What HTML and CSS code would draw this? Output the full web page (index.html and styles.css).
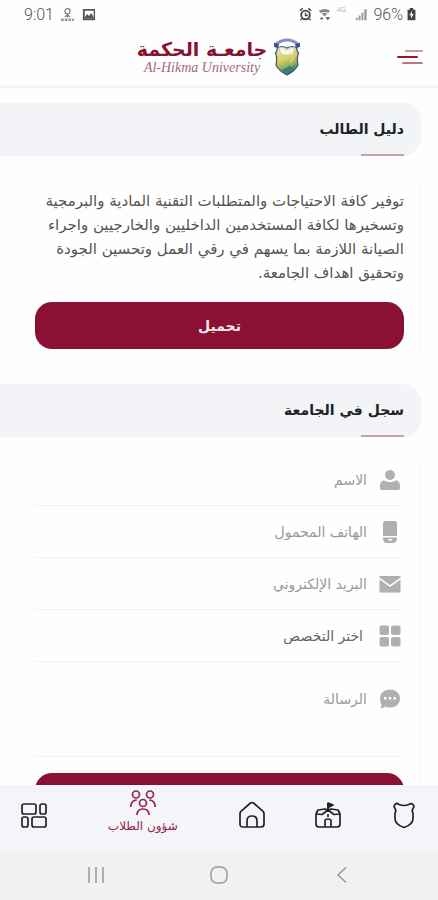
FILE: index.html
```html
<!DOCTYPE html>
<html lang="ar" dir="rtl">
<head>
<meta charset="utf-8">
<meta name="viewport" content="width=device-width, initial-scale=1">
<title>جامعة الحكمة</title>
<link rel="stylesheet" href="styles.css">
</head>
<body>
<div class="status" dir="ltr">
  <div class="status-group">
    <span class="clock">9:01</span>
    <svg class="status-icon" viewBox="0 0 16 16" fill="none" stroke="#777" stroke-width="1.2"><circle cx="8" cy="4.500" r="2.800"/><path d="M8 7.500v4M5 10.500l3-2 3 2"/><path d="M1 13.500h14" stroke-width="2.600" stroke="#999" stroke-dasharray="3 1"/></svg>
    <svg class="status-icon" viewBox="0 0 16 16"><path fill="#555" fill-rule="evenodd" d="M2 2h13v12H2zM4 4v8h9.500V4z"/><path fill="#555" d="M4 11l2.500-3.500 2 2L11 6.500l2.500 4.500v1H4z"/></svg>
  </div>
  <div class="status-group status-right">
    <svg class="status-icon" viewBox="0 0 16 16" fill="none" stroke="#444"><circle cx="8" cy="8.500" r="4.600" stroke-width="2"/><path d="M8 6v3h2.500M2 4l3-2.500M14 4l-3-2.500M4 12.500L2.500 14M12 12.500l1.500 1.500" stroke-width="1.500"/></svg>
    <svg class="status-icon" viewBox="0 0 16 16"><path d="M2 4q6-4 12 0l-2 2.500q-4-2.500-8 0zM5 7q3-2 6 0L8 10z" fill="#888"/><path d="M9 11h5l-2.500 3zM3 13l2-2.500L7 13z" fill="#555"/></svg>
    <span class="network">4G</span>
    <svg class="status-icon" viewBox="0 0 16 16"><path d="M2 14v-2.500h2V14zM5 14v-5h2v5zM8 14V6h2v8zM11 14V2.500h2.500V14z" fill="#999"/></svg>
    <span class="battery-level">96%</span>
    <svg class="battery" viewBox="0 0 10 16"><path d="M3 1h4v2h2.500v12H.5V3H3z" fill="#444"/><path d="M5.500 4.500L2.500 9.500h2v3.500l3-5h-2z" fill="#fff"/></svg>
  </div>
</div>

<header class="header">
  <button class="menu" aria-label="القائمة">
    <svg viewBox="0 0 28 18" stroke-width="2" stroke-linecap="round"><path d="M10 3h16" stroke="#c59aa4"/><path d="M2 9h19" stroke="#941734"/><path d="M7 15h19" stroke="#b97887"/></svg>
  </button>
  <a class="brand" href="#" dir="ltr">
    <span class="brand-text">
      <span class="brand-ar" lang="ar" dir="rtl">جامعـة الحكمة</span>
      <span class="brand-en" lang="en">Al-Hikma University</span>
    </span>
    <svg class="crest" viewBox="0 0 28 40">
      <defs><linearGradient id="crestFill" x1="0" y1="0" x2="0.3" y2="1"><stop offset="0" stop-color="#eee9bd"/><stop offset=".5" stop-color="#d9d267"/><stop offset=".78" stop-color="#91ae60"/><stop offset="1" stop-color="#247b82"/></linearGradient></defs>
      <path d="M4 11Q5 13 2.500 16Q4.500 20 3 28Q6 34 14 38Q22 34 25 28Q23.500 20 25.500 16Q23 13 24 11Q19 8 14 11Q9 8 4 11z" fill="url(#crestFill)" stroke="#44525d" stroke-width="1.200"/>
      <path d="M6 11Q10 9 14 13Q18 9 22 11L20 17Q14 20 8 17z" fill="#f5f5ed" stroke="#b8bba0" stroke-width=".7"/>
      <path d="M2 8Q14-2 26 8" fill="none" stroke="#8991c4" stroke-width="3"/>
      <path d="M1 6l5 1-1 4-4-1zM27 6l-5 1 1 4 4-1z" fill="#3e4c9b"/>
      <path d="M13 31q3-3 5-1t4-4q0 5-8 10-3-1-5-3z" fill="#32836f"/>
      <path d="M18 16l2 6-3 4" fill="none" stroke="#eee482"/>
    </svg>
  </a>
</header>

<main class="content">
  <section>
    <h2 class="section-title">دليل الطالب</h2>
    <div class="card guide">
      <p class="guide-text">توفير كافة الاحتياجات والمتطلبات التقنية المادية والبرمجية<br>وتسخيرها لكافة المستخدمين الداخليين والخارجيين واجراء<br>الصيانة اللازمة بما يسهم في رقي العمل وتحسين الجودة<br>وتحقيق اهداف الجامعة.</p>
      <button class="primary">تحميل</button>
    </div>
  </section>
  <section>
    <h2 class="section-title">سجل في الجامعة</h2>
    <form class="card form">
      <div class="field">
        <label for="name" aria-label="الاسم"><svg class="field-icon" viewBox="0 0 22 22"><circle cx="11" cy="6" r="5"/><path d="M1 17c0-3.500 2-5.500 4.500-5.500 3 2 8 2 11 0 2.500 0 4.500 2 4.500 5.500v2c0 1.500-1 2-2 2H3c-1 0-2-.5-2-2z"/></svg></label>
        <input id="name" type="text" placeholder="الاسم">
      </div>
      <div class="field">
        <label for="phone" aria-label="الهاتف المحمول"><svg class="field-icon" viewBox="0 0 22 22"><path d="M6.500 0h9Q18 0 18 2.500V15H4V2.500Q4 0 6.500 0z"/><path fill-rule="evenodd" d="M4 16.500h14Q18 22 14 22H8q-4 0-4-5.500zM9 18v1.500h4V18z"/></svg></label>
        <input id="phone" type="tel" dir="rtl" placeholder="الهاتف المحمول">
      </div>
      <div class="field">
        <label for="email" aria-label="البريد الإلكتروني"><svg class="field-icon" viewBox="0 0 22 22"><path d="M.5 3h21v1.500L11 12 .5 4.500z"/><path d="M.5 6.500L11 14l10.500-7.500V19.500H.5z"/></svg></label>
        <input id="email" type="email" placeholder="البريد الإلكتروني">
      </div>
      <div class="field">
        <label for="major" aria-label="التخصص"><svg class="field-icon" viewBox="0 0 22 22"><rect x="0.500" y="0.500" width="9.500" height="9.500" rx="2"/><rect x="12" y="0.500" width="9.500" height="9.500" rx="2"/><rect x="0.500" y="12" width="9.500" height="9.500" rx="2"/><rect x="12" y="12" width="9.500" height="9.500" rx="2"/></svg></label>
        <select id="major"><option>اختر التخصص</option></select>
      </div>
      <div class="field message">
        <label for="message" aria-label="الرسالة"><svg class="field-icon" viewBox="0 0 22 22"><path fill-rule="evenodd" d="M11 1.500c6 0 10 4 10 9s-4 9-10 9q-3 0-5-1-2 2-4.500 2 1-2 1-4Q1 14 1 10.500c0-5 4-9 10-9zM5 9v2.500h2.500V9zm4.800 0v2.500h2.400V9zm4.700 0v2.500H17V9z"/></svg></label>
        <textarea id="message" rows="2" placeholder="الرسالة"></textarea>
      </div>
      <button class="primary" type="submit" aria-label="إرسال"></button>
    </form>
  </section>
</main>

<nav class="tabs">
  <a href="#" aria-label="الجامعة"><svg class="tab-icon" viewBox="0 0 26 28"><path d="M4 3.500q2-2 4 0 5 2 10 0 2-2 4 0 1.800 2 0 4-1.500 2 0 5v5q0 6-9 9-9-3-9-9v-5q1.500-3 0-5-1.800-2 0-4z"/></svg></a>
  <a href="#" aria-label="الكليات"><svg class="tab-icon" viewBox="0 0 26 28"><path d="M13 9V2"/><path d="M13 2l5 2-5 2.500z" fill="currentColor"/><path d="M1 13l2-4 7-1 3 1 3-1 7 1 2 4-6 .5L13 9l-6 4.500z"/><path d="M1 13v10q0 3 3 3h18q3 0 3-3V13M10 26v-6q0-2 3-2t3 2v6M13 13v3"/></svg></a>
  <a href="#" aria-label="الرئيسية"><svg class="tab-icon" viewBox="0 0 26 28"><path d="M1 12.500Q1 11 2.500 9.800L11.500 2q1.500-1 3 0l9 7.800Q25 11 25 12.500V23q0 3-3 3H4q-3 0-3-3zM8 26v-6q0-5 5-5t5 5v6"/></svg></a>
  <a class="active" href="#" aria-current="page"><svg class="tab-icon" viewBox="0 0 26 28"><circle cx="6" cy="5.500" r="3.500"/><circle cx="20" cy="5.500" r="3.500"/><circle cx="13" cy="14" r="3.500"/><path d="M.8 18q0-6.500 6-7M25.200 18q0-6.500-6-7M7 26q0-6 6-6t6 6"/></svg><span>شؤون الطلاب</span></a>
  <a href="#" aria-label="المزيد"><svg class="tab-icon" viewBox="0 0 26 28"><rect x="1" y="3" width="14" height="10" rx="2"/><rect x="19" y="3" width="6" height="10" rx="2"/><rect x="1" y="16" width="6" height="10" rx="2"/><rect x="11" y="16" width="14" height="10" rx="2"/></svg></a>
</nav>

<div class="system" dir="ltr">
  <button aria-label="التطبيقات الأخيرة"><svg viewBox="0 0 20 20"><path d="M3 2v16M10 2v16M17 2v16"/></svg></button>
  <button aria-label="الشاشة الرئيسية"><svg viewBox="0 0 20 20"><rect x="2" y="2" width="16" height="16" rx="6"/></svg></button>
  <button aria-label="رجوع"><svg viewBox="0 0 20 20"><path d="M14 2.500L6 10l8 7.500"/></svg></button>
</div>
</body>
</html>
```
FILE: styles.css
```css
* {
  box-sizing: border-box;
}

body {
  margin: 0;
  height: 100vh;
  display: flex;
  flex-direction: column;
  background: #fefefe;
  color: #555;
  font-family: "DejaVu Sans", sans-serif;
  font-size: 14px;
}

button,
input,
select,
textarea {
  font: inherit;
  color: inherit;
  border: 0;
  margin: 0;
  padding: 0;
  background: none;
}

a {
  color: inherit;
  text-decoration: none;
}

svg {
  display: block;
}

.status {
  flex: none;
  height: 28px;
  padding: 0 22px 0 24px;
  display: flex;
  justify-content: space-between;
  align-items: center;
  font-family: Roboto, sans-serif;
  font-weight: 300;
  font-size: 16px;
  color: #555;
}

.status-group {
  display: flex;
  align-items: center;
  gap: 6px;
}

.status-right {
  gap: 4px;
}

.status-icon {
  width: 15px;
  height: 15px;
}

.network {
  width: 14px;
  font-size: 8px;
  color: #aaa;
  align-self: flex-start;
}

.battery {
  width: 9px;
  height: 14px;
}

.header {
  flex: none;
  height: 60px;
  padding: 0 14px;
  display: grid;
  grid-template-columns: 1fr auto 1fr;
  align-items: center;
  border-bottom: 3px solid #f3f3f4;
}

.menu {
  justify-self: start;
}

.menu svg {
  width: 28px;
  height: 18px;
}

.brand {
  display: flex;
  align-items: center;
  gap: 6px;
}

.brand-text {
  display: flex;
  flex-direction: column;
  align-items: center;
}

.brand-ar {
  color: #861330;
  font-size: 19px;
  line-height: 22px;
  font-weight: bold;
}

.brand-en {
  color: #a8667a;
  font-family: "Liberation Serif", serif;
  font-style: italic;
  font-size: 14px;
  line-height: 16px;
}

.crest {
  width: 28px;
  height: 40px;
}

.content {
  flex: 1;
  min-height: 0;
  overflow: hidden;
  padding-top: 15px;
}

.section-title {
  position: relative;
  margin: 0 17px 0 0;
  padding: 0 17px;
  background: #f3f4f8;
  border-radius: 0 18px 18px 0;
  color: #222;
  font-size: 14px;
  line-height: 53px;
}

.section-title::after {
  content: "";
  position: absolute;
  right: 17px;
  bottom: 0;
  width: 43px;
  height: 2px;
  background: #c9a0ab;
}

.card {
  margin: 16px 17px 18px 18px;
  padding: 16px;
  border: 1px solid #f9f9fa;
  border-radius: 16px;
}

.guide-text {
  margin: 0 0 17px;
  font-size: 15px;
  line-height: 24px;
  white-space: nowrap;
}

.primary {
  display: block;
  width: 100%;
  height: 47px;
  border-radius: 17px;
  background: #8a1133;
  color: #f8e8ec;
  font-weight: bold;
}

.form {
  padding-top: 0;
}

.field {
  height: 52px;
  display: flex;
  align-items: center;
  gap: 12px;
  padding-right: 3px;
  border-bottom: 1px solid #f2f2f2;
  color: #999;
}

.field-icon {
  width: 22px;
  height: 22px;
  fill: #b0b0b0;
}

.field input,
.field select,
.field textarea {
  flex: 1;
  min-width: 0;
  outline: 0;
}

.field ::placeholder {
  color: #999;
  opacity: 1;
}

.field select {
  appearance: none;
  padding-right: 4px;
  color: #666;
}

.message {
  height: 95px;
  margin-bottom: 16px;
  padding-top: 26px;
  align-items: flex-start;
}

.message textarea {
  line-height: 22px;
  resize: none;
}

.tabs {
  flex: none;
  height: 65px;
  margin: 0 -4px;
  display: grid;
  grid-template-columns: 76fr 76fr 76fr 141fr 76fr;
  align-items: center;
  background: #f3f5f9;
  color: #222;
}

.tabs a {
  display: flex;
  flex-direction: column;
  align-items: center;
  padding-bottom: 6px;
}

.tab-icon {
  width: 26px;
  height: 28px;
  fill: none;
  stroke: currentColor;
  stroke-width: 1.7px;
  stroke-linejoin: round;
}

.tabs .active {
  color: #96234a;
  font-size: 12px;
  line-height: 18px;
  padding-bottom: 12px;
}

.system {
  flex: none;
  height: 50px;
  padding: 0 34px;
  display: grid;
  grid-template-columns: 1fr 1fr 1fr;
  place-items: center;
  background: #f1f1f2;
}

.system svg {
  width: 20px;
  height: 20px;
  fill: none;
  stroke: #999;
  stroke-width: 1.5px;
}
```
